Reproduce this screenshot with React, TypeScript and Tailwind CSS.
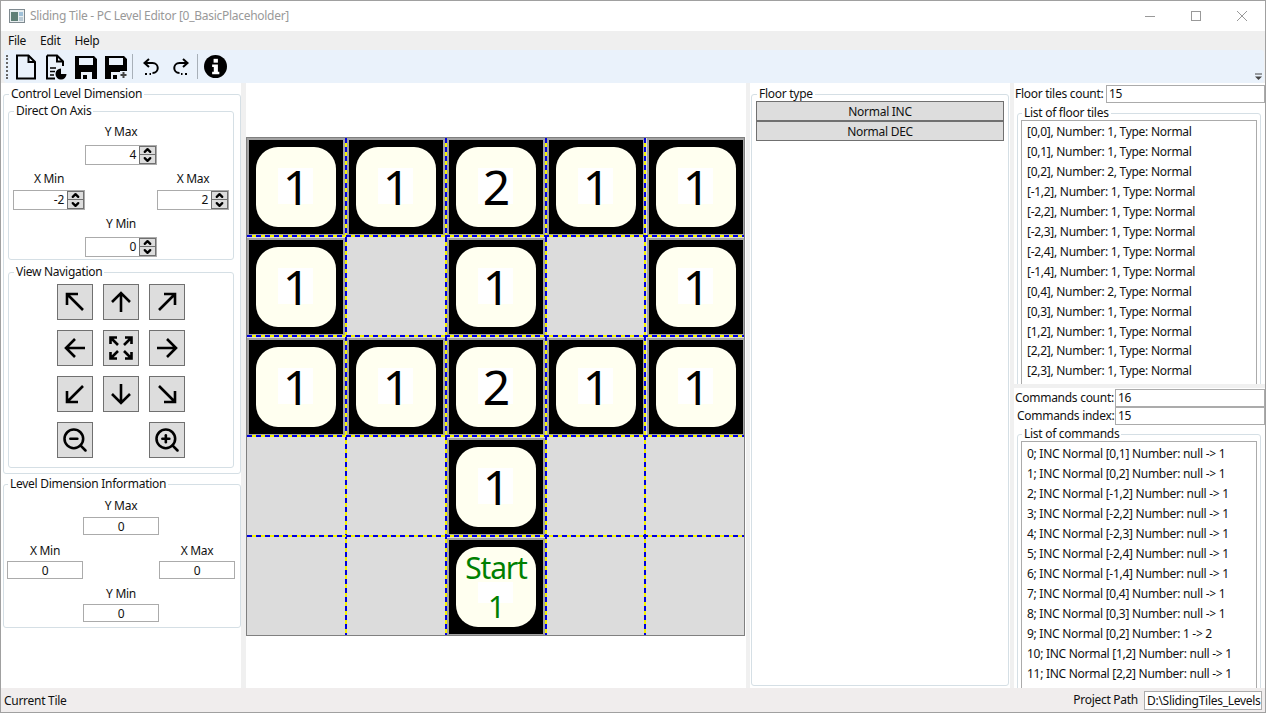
import { ReactNode } from "react";
import { ChevronDown, ChevronUp, ZoomIn, ZoomOut } from "lucide-react";

const floorTiles = [
  "[0,0], Number: 1, Type: Normal",
  "[0,1], Number: 1, Type: Normal",
  "[0,2], Number: 2, Type: Normal",
  "[-1,2], Number: 1, Type: Normal",
  "[-2,2], Number: 1, Type: Normal",
  "[-2,3], Number: 1, Type: Normal",
  "[-2,4], Number: 1, Type: Normal",
  "[-1,4], Number: 1, Type: Normal",
  "[0,4], Number: 2, Type: Normal",
  "[0,3], Number: 1, Type: Normal",
  "[1,2], Number: 1, Type: Normal",
  "[2,2], Number: 1, Type: Normal",
  "[2,3], Number: 1, Type: Normal",
];

const commands = [
  "0; INC Normal [0,1] Number: null -> 1",
  "1; INC Normal [0,2] Number: null -> 1",
  "2; INC Normal [-1,2] Number: null -> 1",
  "3; INC Normal [-2,2] Number: null -> 1",
  "4; INC Normal [-2,3] Number: null -> 1",
  "5; INC Normal [-2,4] Number: null -> 1",
  "6; INC Normal [-1,4] Number: null -> 1",
  "7; INC Normal [0,4] Number: null -> 1",
  "8; INC Normal [0,3] Number: null -> 1",
  "9; INC Normal [0,2] Number: 1 -> 2",
  "10; INC Normal [1,2] Number: null -> 1",
  "11; INC Normal [2,2] Number: null -> 1",
];

const board = [
  ["1", "1", "2", "1", "1"],
  ["1", "", "1", "", "1"],
  ["1", "1", "2", "1", "1"],
  ["", "", "1", "", ""],
  ["", "", "S", "", ""],
];

function Group({
  title,
  inset,
  className,
  children,
}: {
  title: string;
  inset?: boolean;
  className?: string;
  children: ReactNode;
}) {
  return (
    <fieldset className={`border border-[#d5dfe5] rounded-[3px] min-w-0 ${className ?? ""}`}>
      <legend className={`${inset ? "ml-[1px]" : "ml-[5px]"} px-[2px] h-[16px] leading-[16px] whitespace-nowrap`}>
        {title}
      </legend>
      {children}
    </fieldset>
  );
}

function Spinner({ value }: { value: string }) {
  return (
    <div className="flex w-[72px] h-[20px] border border-[#ababab] bg-white">
      <div className="flex-1 text-right pr-[3px] leading-[18px]">{value}</div>
      <div className="flex flex-col w-[17px] h-[18px]">
        <div className="h-[9px] flex items-center justify-center bg-[#dddddd] border border-[#707070]">
          <ChevronUp size={11} strokeWidth={5} color="#000" />
        </div>
        <div className="h-[9px] flex items-center justify-center bg-[#dddddd] border border-t-0 border-[#707070]">
          <ChevronDown size={11} strokeWidth={5} color="#000" />
        </div>
      </div>
    </div>
  );
}

function ReadBox({ value }: { value: string }) {
  return (
    <div className="w-[76px] h-[18px] border border-[#ababab] bg-white text-center leading-[17px]">{value}</div>
  );
}

function NavButton({ children }: { children?: ReactNode }) {
  return (
    <div className="w-[36px] h-[36px] border border-[#707070] bg-[#dddddd] flex items-center justify-center">
      {children}
    </div>
  );
}

function Arrow({ d }: { d: string }) {
  return (
    <svg width="26" height="26" viewBox="0 0 26 26" fill="none" stroke="#000" strokeWidth="2.6">
      <path d={d} />
    </svg>
  );
}

function Tile({ value }: { value: string }) {
  if (!value) return <div className="w-[100px] h-[100px]" />;
  const isStart = value === "S";
  return (
    <div className="w-[100px] h-[100px]">
      <div className="w-[98px] h-[98px] border-2 border-[#a3a3a3] bg-black flex items-center justify-center">
        <div className="relative w-[80px] h-[80px] rounded-[22px] bg-[#fffff0] flex items-center justify-center">
          <div
            className={`absolute w-[35px] bg-white left-[22px] ${isStart ? "h-[21px] top-[35px]" : "h-[36px] top-[21px]"}`}
          />
          {isStart ? (
            <div className="relative text-[#008000] text-[30px] leading-[39px] text-center tracking-[-1.2px] -mt-[1px]">
              Start
              <br />1
            </div>
          ) : (
            <div className="relative text-black text-[48px] leading-[48px] tracking-normal ml-[1px]">{value}</div>
          )}
        </div>
      </div>
    </div>
  );
}

function GridLines() {
  const xs = [99, 199, 299, 398];
  const ys = [98, 198, 298, 398];
  return (
    <svg className="absolute left-0 top-0 w-[498px] h-[498px] pointer-events-none" viewBox="0 0 498 498">
      <g fill="none" strokeWidth={2}>
        {xs.map((p) => (
          <g key={p}>
            <line x1={p} y1={0} x2={p} y2={498} stroke="#f4f400" />
            <line x1={p} y1={0} x2={p} y2={498} stroke="#0000dd" strokeDasharray="5 4" />
          </g>
        ))}
        {ys.map((p) => (
          <g key={p}>
            <line x1={0} y1={p} x2={498} y2={p} stroke="#f4f400" />
            <line x1={0} y1={p} x2={498} y2={p} stroke="#0000dd" strokeDasharray="5 4" />
          </g>
        ))}
      </g>
    </svg>
  );
}

function NewIcon() {
  return (
    <svg width="22" height="26" viewBox="0 0 22 26" fill="none" stroke="#000" strokeWidth="2">
      <path d="M2 1.5H13.5L20 8V24.5H2Z" />
      <path d="M13.5 1.5V8H20" />
    </svg>
  );
}

function OpenDocIcon() {
  return (
    <svg width="22" height="26" viewBox="0 0 22 26" fill="none" stroke="#000" strokeWidth="2">
      <path d="M2 1.5H12L18 7.5V12M2 1.5V24.5H10" />
      <path d="M12 1.5V7.5H18" />
      <path d="M5 14H11M5 17.5H10M5 21H9" strokeWidth="1.5" />
      <path d="M16 14.5A5.5 5.5 0 1 0 21.5 20H16Z" fill="#000" stroke="none" />
    </svg>
  );
}

function SaveIcon({ plus }: { plus?: boolean }) {
  return (
    <svg width="22" height="24" viewBox="0 0 22 24">
      <path fillRule="evenodd" d="M0 1H19L22 4V24H0ZM4 3V10H18V3ZM6 17V24H17V17Z" fill="#000" />
      <rect x="8" y="20" width="4" height="4" fill="#000" />
      {plus && (
        <g>
          <rect x="15" y="16" width="7" height="8" fill="#eaf2fb" />
          <path d="M18.500 17V23M15.500 20H21.500" stroke="#444" strokeWidth="2" />
        </g>
      )}
    </svg>
  );
}

function UndoIcon({ flip }: { flip?: boolean }) {
  return (
    <svg
      width="18"
      height="22"
      viewBox="0 0 18 22"
      fill="none"
      stroke="#000"
      strokeWidth="2"
      className={flip ? "-scale-x-100" : ""}
    >
      <path d="M7 3L2.500 7L7 11" />
      <path d="M3 7H10.500C17.500 7 17.500 17 10.500 17" />
      <path d="M9 18H7.500M5 18H3" />
    </svg>
  );
}

function InfoIcon() {
  return (
    <svg width="23" height="23" viewBox="0 0 24 24">
      <circle cx="12" cy="12" r="12" fill="#000" />
      <rect x="10" y="4" width="4.500" height="4" fill="#fff" />
      <path d="M8.500 10H14.500V17.500H16V20H8.500V17.500H10.200V12.500H8.500Z" fill="#fff" />
    </svg>
  );
}

function FitIcon() {
  return (
    <svg width="26" height="26" viewBox="0 0 26 26" fill="none" stroke="#000" strokeWidth="2.600">
      <path d="M2.500 9V2.500H9M2.500 2.500L10 10" />
      <path d="M23.500 9V2.500H17M23.500 2.500L16 10" />
      <path d="M2.500 17V23.500H9M2.500 23.500L10 16" />
      <path d="M23.500 17V23.500H17M23.500 23.500L16 16" />
    </svg>
  );
}

export default function App() {
  return (
    <div className="w-[1266px] h-[713px] flex flex-col border border-[#a0a0a0] bg-white text-[12px] tracking-[-0.28px] text-[#111] font-['Noto_Sans','Open_Sans',sans-serif] overflow-hidden">
      {/* Title bar */}
      <div className="h-[30px] shrink-0 flex items-center pl-[8px] bg-white text-[#999999]">
        <svg width="16" height="14" viewBox="0 0 16 14" className="mr-[5px]">
          <rect x="0.500" y="0.500" width="15" height="13" fill="#e8eef0" stroke="#7f8a90" />
          <rect x="2" y="3" width="7" height="9" fill="#5f7f76" />
          <rect x="10" y="3" width="4" height="4" fill="#9fc0d8" />
          <rect x="10" y="8" width="4" height="4" fill="#b9c9d4" />
        </svg>
        <span>Sliding Tile - PC Level Editor [0_BasicPlaceholder]</span>
        <div className="ml-auto flex items-center">
          <svg width="46" height="12" viewBox="0 0 46 12" fill="none" stroke="#999999">
            <path d="M18 6.500H28" />
          </svg>
          <svg width="46" height="12" viewBox="0 0 46 12" fill="none" stroke="#999999">
            <rect x="18.500" y="1.500" width="9" height="9" />
          </svg>
          <svg width="46" height="12" viewBox="0 0 46 12" fill="none" stroke="#999999">
            <path d="M18 1L28 11M28 1L18 11" />
          </svg>
        </div>
      </div>

      {/* Menu */}
      <div className="h-[19px] shrink-0 flex items-center bg-[#efefef] pl-[7px] gap-[14px]">
        <span>File</span>
        <span>Edit</span>
        <span>Help</span>
      </div>

      {/* Toolbar */}
      <div className="h-[33px] shrink-0 bg-[#f0f0f0] pl-[3px] pr-[1px]">
        <div className="relative h-full rounded-[3px] bg-[#eaf2fb] flex items-center pl-[2px]">
          <div className="w-[3px] h-[24px] border-l-2 border-dotted border-[#666] mr-[6px]" />
          <NewIcon />
          <div className="ml-[8px]"><OpenDocIcon /></div>
          <div className="ml-[8px]"><SaveIcon /></div>
          <div className="ml-[8px]"><SaveIcon plus /></div>
          <div className="w-px h-[25px] bg-[#a8b0b8] ml-[5px] mr-[9px]" />
          <UndoIcon />
          <div className="ml-[12px]"><UndoIcon flip /></div>
          <div className="w-px h-[25px] bg-[#a8b0b8] ml-[7px] mr-[6px]" />
          <InfoIcon />
          <svg width="8" height="8" viewBox="0 0 8 8" className="absolute right-[1px] bottom-[2px]">
            <path d="M0 1H7" stroke="#444" />
            <path d="M0 3.500H7L3.500 7Z" fill="#444" />
          </svg>
        </div>
      </div>

      {/* Body */}
      <div className="flex-1 min-h-0 flex bg-[#f0f0f0]">
        {/* Left panel */}
        <div className="w-[240px] shrink-0 bg-white pl-[2px] flex flex-col">
          <Group title="Control Level Dimension" inset className="mt-[3px] w-[238px] h-[388px] px-[4px]">
            <Group title="Direct On Axis" className="mt-[1px] w-[226px] h-[157px] flex flex-col items-center">
              <div className="h-[26px] leading-[25px] text-center">Y Max</div>
              <Spinner value="4" />
              <div className="w-full flex justify-between px-[4px] mt-[5px]">
                <div className="flex flex-col items-center">
                  <div className="h-[20px] leading-[18px]">X Min</div>
                  <Spinner value="-2" />
                </div>
                <div className="flex flex-col items-center">
                  <div className="h-[20px] leading-[18px]">X Max</div>
                  <Spinner value="2" />
                </div>
              </div>
              <div className="h-[27px] leading-[28px] text-center">Y Min</div>
              <Spinner value="0" />
            </Group>
            <Group title="View Navigation" className="mt-[4px] w-[226px] h-[204px]">
              <div className="grid grid-cols-[36px_36px_36px] gap-[10px] justify-center mt-[4px]">
                <NavButton><Arrow d="M5 5L21 21M5 16V5H16" /></NavButton>
                <NavButton><Arrow d="M13 23V4M4 13L13 4L22 13" /></NavButton>
                <NavButton><Arrow d="M21 5L5 21M10 5H21V16" /></NavButton>
                <NavButton><Arrow d="M23 13H4M13 4L4 13L13 22" /></NavButton>
                <NavButton><FitIcon /></NavButton>
                <NavButton><Arrow d="M3 13H22M13 4L22 13L13 22" /></NavButton>
                <NavButton><Arrow d="M21 5L5 21M5 10V21H16" /></NavButton>
                <NavButton><Arrow d="M13 3V22M4 13L13 22L22 13" /></NavButton>
                <NavButton><Arrow d="M5 5L21 21M21 10V21H10" /></NavButton>
                <NavButton><ZoomOut size={28} strokeWidth={2.2} color="#000" /></NavButton>
                <div />
                <NavButton><ZoomIn size={28} strokeWidth={2.2} color="#000" /></NavButton>
              </div>
            </Group>
          </Group>
          <Group
            title="Level Dimension Information"
            inset
            className="mt-[2px] w-[238px] h-[152px] flex flex-col items-center pl-[3px] pr-[5px]"
          >
            <div className="h-[25px] leading-[27px] text-center">Y Max</div>
            <ReadBox value="0" />
            <div className="w-full flex justify-between mt-[5px]">
              <div className="flex flex-col items-center">
                <div className="h-[21px] leading-[22px]">X Min</div>
                <ReadBox value="0" />
              </div>
              <div className="flex flex-col items-center">
                <div className="h-[21px] leading-[22px]">X Max</div>
                <ReadBox value="0" />
              </div>
            </div>
            <div className="h-[25px] leading-[30px] text-center">Y Min</div>
            <ReadBox value="0" />
          </Group>
        </div>

        <div className="w-[5px] shrink-0" />

        {/* Board */}
        <div className="w-[500px] shrink-0 bg-white pt-[54px]">
          <div className="relative w-[499px] h-[499px] border border-[#808080] bg-[#dcdcdc] overflow-hidden">
            <div className="grid grid-cols-[100px_100px_100px_100px_100px]">
              {board.flat().map((value, i) => (
                <Tile key={i} value={value} />
              ))}
            </div>
            <GridLines />
          </div>
        </div>

        <div className="w-[4px] shrink-0" />

        {/* Floor type */}
        <div className="w-[260px] shrink-0 bg-white pt-[3px] pl-[1px] pb-[2px]">
          <Group title="Floor type" inset className="w-[258px] h-full px-[4px]">
            <div className="h-[20px] border border-[#707070] bg-[#dddddd] text-center leading-[19px] mt-[-1px]">
              Normal INC
            </div>
            <div className="h-[20px] border border-[#707070] bg-[#dddddd] text-center leading-[19px]">Normal DEC</div>
          </Group>
        </div>

        <div className="w-[4px] shrink-0" />

        {/* Right panel */}
        <div className="flex-1 min-w-0 flex flex-col">
          <div className="h-[301px] shrink-0 bg-white overflow-hidden">
            <div className="flex items-center h-[18px] mt-[2px]">
              <span className="w-[92px] pl-[1px] whitespace-nowrap leading-[15px] mb-[2px]">Floor tiles count:</span>
              <div className="flex-1 h-[18px] border border-[#ababab] pl-[2px] leading-[15px]">15</div>
            </div>
            <Group title="List of floor tiles" inset className="ml-[3px] mr-[4px] mt-[2px] h-[320px] px-[3px]">
              <div className="h-[300px] -mt-[1px] border border-[#ababab] pl-[5px] pt-[1px] leading-[19.95px] whitespace-nowrap">
                {floorTiles.map((t) => (
                  <div key={t}>{t}</div>
                ))}
              </div>
            </Group>
          </div>
          <div className="h-[4px] shrink-0" />
          <div className="flex-1 min-h-0 bg-white overflow-hidden">
            <div className="flex items-center h-[18px] mt-[1px]">
              <span className="w-[101px] pl-[1px] whitespace-nowrap leading-[16px] mb-[1px]">Commands count:</span>
              <div className="flex-1 h-[18px] border border-[#ababab] pl-[2px] leading-[15px]">16</div>
            </div>
            <div className="flex items-center h-[18px]">
              <span className="w-[101px] pl-[3px] whitespace-nowrap leading-[16px] mb-[1px]">Commands index:</span>
              <div className="flex-1 h-[18px] border border-[#ababab] pl-[2px] leading-[15px]">15</div>
            </div>
            <Group title="List of commands" inset className="ml-[3px] mr-[4px] mt-[1px] h-[320px] px-[3px]">
              <div className="h-[300px] -mt-[1px] border border-[#ababab] pl-[5px] pt-[2px] leading-[20px] whitespace-nowrap">
                {commands.map((c) => (
                  <div key={c}>{c}</div>
                ))}
              </div>
            </Group>
          </div>
        </div>
      </div>

      {/* Status bar */}
      <div className="h-[24px] shrink-0 bg-[#f0eded] flex items-center pl-[3px] pr-[3px]">
        <span className="pt-[1px]">Current Tile</span>
        <span className="ml-auto mr-[6px]">Project Path</span>
        <div className="w-[118px] h-[19px] border border-[#ababab] bg-white pl-[2px] leading-[17px] whitespace-nowrap overflow-hidden">
          D:\SlidingTiles_Levels
        </div>
      </div>
    </div>
  );
}
